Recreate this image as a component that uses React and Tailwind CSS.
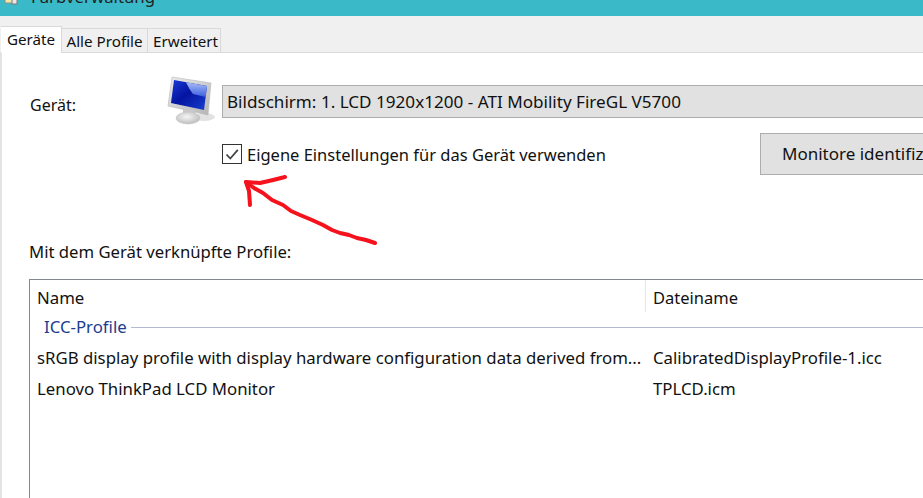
export default function App() {
  return (
    <div className="relative w-[923px] h-[498px] overflow-hidden bg-white text-[#111] text-[16.800px] leading-[22px] font-['Noto_Sans',sans-serif]">
      {/* Title bar */}
      <div className="h-[16px] bg-[#3ab9c8] overflow-hidden flex items-start pl-[2px]">
        <svg width="16" height="5" viewBox="0 0 16 5" className="shrink-0">
          <rect x="3" y="-6" width="8" height="9" fill="#f2e6a8" stroke="#8f8f80" />
          <rect x="10" y="-4" width="5" height="8" fill="#e8e8e8" stroke="#7a7a7a" />
        </svg>
        <span className="ml-[13px] -mt-[14px] text-[#222] whitespace-nowrap">Farbverwaltung</span>
      </div>

      {/* Tab strip */}
      <div className="h-[37px] bg-[#f0f0f0] flex items-end border-b border-[#d9d9d9] pl-[1px] text-[15.200px]">
        <div className="h-[27px] w-[61px] bg-white border-t border-r border-[#d9d9d9] flex items-center justify-center pb-[2px] -mb-[1px]">Geräte</div>
        <div className="h-[24px] w-[86px] bg-[#f0f0f0] border-t border-r border-[#d9d9d9] flex items-center justify-center">Alle Profile</div>
        <div className="h-[24px] w-[73px] bg-[#f0f0f0] border-t border-r border-[#d9d9d9] flex items-center justify-center pl-[3px]">Erweitert</div>
      </div>

      {/* Panel */}
      <div className="border-l-2 border-[#e3e3e3] h-[445px] pl-[27px]">
        {/* Device row */}
        <div className="flex items-start pt-[23px] h-[80px]">
          <span className="ml-[1px] w-[137px] mt-[18px] shrink-0 text-[16px]">Gerät:</span>
          <svg width="50" height="50" viewBox="0 0 50 50" className="shrink-0">
            <defs>
              <linearGradient id="s" x1="0" y1="0" x2="1" y2="1">
                <stop offset="0" stopColor="#1a3ad8" />
                <stop offset="0.45" stopColor="#0414a0" />
                <stop offset="1" stopColor="#1a3fd0" />
              </linearGradient>
              <linearGradient id="g" x1="0" y1="0" x2="0" y2="1">
                <stop offset="0" stopColor="#a9bdf5" />
                <stop offset="1" stopColor="#3c5fe0" />
              </linearGradient>
              <linearGradient id="f" x1="0" y1="0" x2="1" y2="1">
                <stop offset="0" stopColor="#ececec" />
                <stop offset="1" stopColor="#b4b4b4" />
              </linearGradient>
              <radialGradient id="b" cx="0.45" cy="0.4" r="0.7">
                <stop offset="0" stopColor="#f6f6f6" />
                <stop offset="1" stopColor="#b4b4b4" />
              </radialGradient>
            </defs>
            <ellipse cx="37" cy="41" rx="11" ry="4" fill="#cfcfcf" opacity="0.6" />
            <path d="M5 1 L44 7 L41 39 L1 30 Z" fill="url(#f)" stroke="#b8b8b8" strokeWidth="0.6" />
            <path d="M7 4 L40 10 L37 34 L4 27 Z" fill="url(#s)" />
            <path d="M19 6.200 L40 10 L38.600 21 L26 18 Q22 13 19 6.200 Z" fill="url(#g)" />
            <path d="M16 32 L28 34.500 L29 39 L16 38 Z" fill="#c8c8c8" />
            <ellipse cx="21" cy="42" rx="12" ry="6" fill="url(#b)" stroke="#c4c4c4" strokeWidth="0.5" />
          </svg>
          <div className="ml-[5px] mt-[9px] h-[33px] flex-1 min-w-0 bg-[#e1e1e1] border border-[#adadad] border-r-0 pl-[4px] flex items-center whitespace-nowrap text-[17.100px]">
            Bildschirm: 1. LCD 1920x1200 - ATI Mobility FireGL V5700
          </div>
        </div>

        {/* Checkbox row */}
        <div className="flex items-start h-[66px]">
          <div className="ml-[193px] mt-[11px] w-[20px] h-[20px] border border-[#333] bg-white flex items-center justify-center shrink-0">
            <svg width="16" height="16" viewBox="0 0 16 16" fill="none">
              <path d="M2.500 8.500 L6.300 12.500 L13.800 3.800" stroke="#444" strokeWidth="1.800" />
            </svg>
          </div>
          <span className="ml-[5px] mt-[11px] w-[513px] shrink-0 whitespace-nowrap text-[16.500px]">Eigene Einstellungen für das Gerät verwenden</span>
          <div className="h-[42px] flex-1 min-w-0 bg-[#e1e1e1] border border-[#adadad] border-r-0 pl-[21px] flex items-center whitespace-nowrap overflow-hidden text-[17px]">
            Monitore identifiz
          </div>
        </div>

        {/* List label */}
        <div className="h-[80px] flex items-start">
          <span className="mt-[42px] text-[16.700px]">Mit dem Gerät verknüpfte Profile:</span>
        </div>

        {/* List */}
        <div className="h-[240px] border border-[#828790] border-r-0 pl-[7px] overflow-hidden">
          <div className="flex h-[33px] items-start">
            <span className="w-[609px] h-[32px] border-r border-[#e5e5e5] pt-[7px] shrink-0">Name</span>
            <span className="ml-[7px] pt-[7px] text-[16.500px]">Dateiname</span>
          </div>
          <div className="flex items-center h-[28px] pl-[7px] text-[#1a3d8f]">
            <span>ICC-Profile</span>
            <div className="ml-[4px] h-px flex-1 bg-[#b4b9d2]" />
          </div>
          <div className="flex items-center h-[33px] whitespace-nowrap">
            <span className="w-[616px] shrink-0">sRGB display profile with display hardware configuration data derived from...</span>
            <span>CalibratedDisplayProfile-1.icc</span>
          </div>
          <div className="flex items-center h-[29px] whitespace-nowrap">
            <span className="w-[616px] shrink-0">Lenovo ThinkPad LCD Monitor</span>
            <span>TPLCD.icm</span>
          </div>
        </div>
      </div>

      {/* Hand-drawn red arrow */}
      <svg className="absolute left-0 top-0 pointer-events-none" width="923" height="498" viewBox="0 0 923 498" fill="none">
        <path d="M285 177 L273 180 L260 183 L246 182 L249 191 L250 205" stroke="#f5121c" strokeWidth="4" strokeLinecap="round" strokeLinejoin="round" />
        <path d="M246 182 L254 188 L263 193 L272 200 L283 205 L291 211 L300 215 L312 220 L323 225 L332 230 L340 233 L349 235 L357 238 L366 240 L375 243" stroke="#f5121c" strokeWidth="4" strokeLinecap="round" strokeLinejoin="round" />
      </svg>
    </div>
  );
}
